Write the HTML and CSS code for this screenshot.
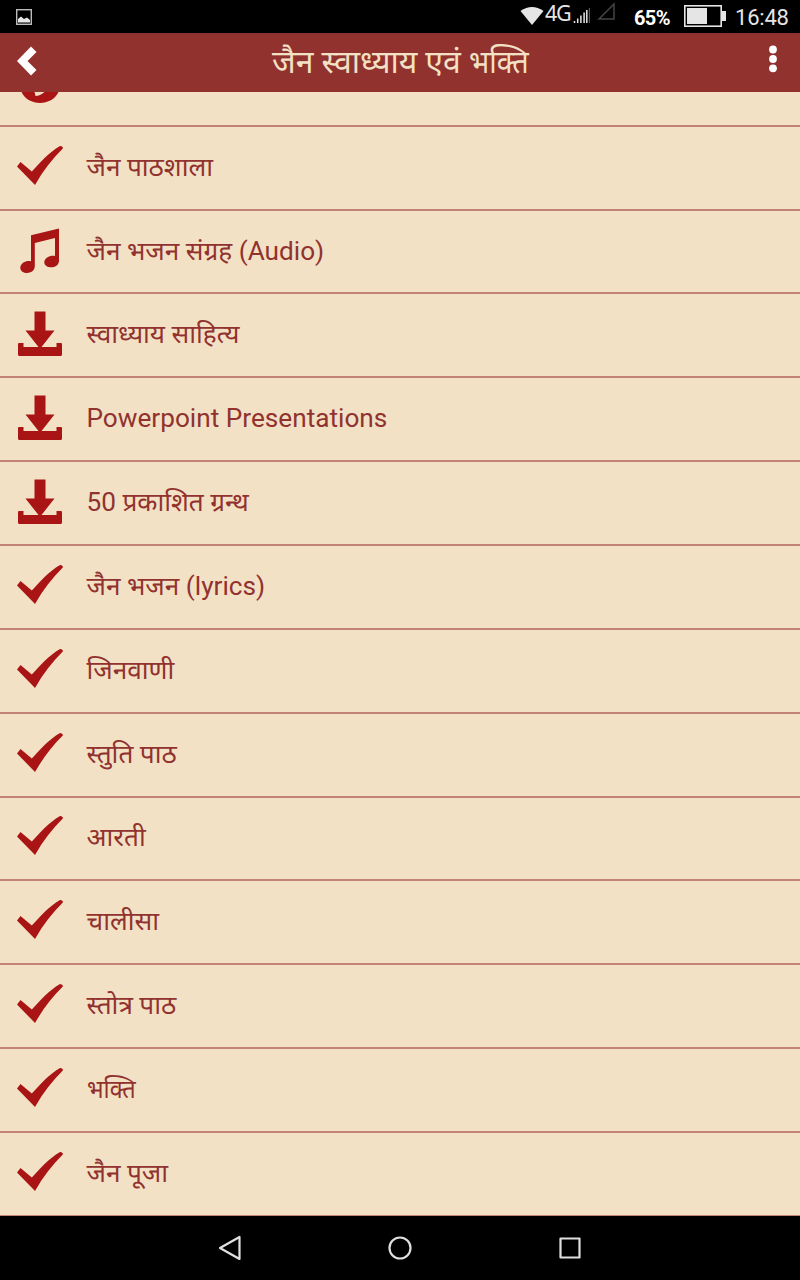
FILE: index.html
```html
<!DOCTYPE html>
<html lang="hi">
<head>
<meta charset="utf-8">
<title>जैन स्वाध्याय एवं भक्ति</title>
<link rel="stylesheet" href="styles.css">
</head>
<body>
<svg class="defs" width="0" height="0">
  <symbol id="check" viewBox="0 0 80 82"><path d="M17 39.500L20.500 35L31.800 44.600C40 35.500 49 25.500 60 19Q63.500 19.500 62.800 21.500C52 32 43 44 35 58Z"/></symbol>
  <symbol id="music" viewBox="0 0 80 82"><path d="M31 24.300L59 17.400V50C58.500 58.500 44.300 58 44.300 51.200C44.500 46.200 51 43.800 55 45V27L34.800 32V55.500C34 64.300 20.300 63.500 20.300 56.700C20.500 51.500 27 49 31 50.300Z"/></symbol>
  <symbol id="download" viewBox="0 0 80 82"><path d="M34.500 17.500H45.500V36.500H54.500L41.500 53H56.500V49H61Q62 49 62 50V60.500Q62 62 60.500 62H19.500Q18 62 18 60.500V50Q18 49 19 49H23.500V53H38.500L25.500 36.500H34.500Z"/></symbol>
</svg>
<div class="screen">
  <header class="status">
    <svg class="status-icon" width="18" height="18" viewBox="0 0 18 18"><rect x="1.700" y="1.700" width="14.600" height="14.600" fill="none" stroke="#bbb" stroke-width="1.400"/><path d="M3 14.500V11L6 8.500L9 11L12 9.500L15 12V14.500Z" fill="#e5e5e5"/></svg>
    <div class="status-right">
      <svg class="wifi" width="24" height="20" viewBox="0 0 24 20"><path d="M.5 5Q12-3 23.500 5L12 19Z" fill="#e5e5e5"/></svg>
      <span class="net">4G</span>
      <svg class="signal" width="18" height="18" viewBox="0 0 18 18"><path d="M1.500 16V14M4.700 16V11.500M7.900 16V8.500M11.100 16V5.500M13.800 16V3" stroke="#e5e5e5" stroke-width="1.500"/><path d="M16.400 16V1" stroke="#555" stroke-width="1.200"/></svg>
      <svg class="nosim" width="20" height="19" viewBox="0 0 20 19"><path d="M2 17L17 2V17Z" fill="none" stroke="#444" stroke-width="1.500"/></svg>
      <span class="percent">65%</span>
      <svg class="battery" width="42" height="22" viewBox="0 0 42 22"><rect x=".8" y=".8" width="36.400" height="20.400" fill="none" stroke="#e5e5e5" stroke-width="1.600"/><path d="M3 3H23V19H3ZM37 6H42V16H37Z" fill="#e5e5e5"/></svg>
      <span class="clock">16:48</span>
    </div>
  </header>
  <nav class="bar">
    <svg class="back" width="20" height="30" viewBox="0 0 20 30"><path d="M14 .5L19.500 6L10.500 15L19.500 24L14 29.500L0 15Z" fill="#fff"/></svg>
    <h1 class="title">जैन स्वाध्याय एवं <span class="narrow">भक्ति</span></h1>
    <svg class="more" width="8" height="28" viewBox="0 0 8 28"><circle cx="4" cy="4.500" r="3.900"/><circle cx="4" cy="14" r="3.900"/><circle cx="4" cy="23.300" r="3.900"/></svg>
  </nav>
  <main class="list">
    <div class="row row-cut"><svg width="80" height="32" viewBox="0 0 80 32"><path d="M21.500 0C28 14.500 52 14.500 58.500 0H44.500Q40 4 35.500 4L34.500 0Z"/></svg></div>
    <div class="row"><svg class="icon"><use href="#check"/></svg><span class="label">जैन पाठशाला</span></div>
    <div class="row"><svg class="icon"><use href="#music"/></svg><span class="label">जैन भजन संग्रह (Audio)</span></div>
    <div class="row"><svg class="icon"><use href="#download"/></svg><span class="label">स्वाध्याय साहित्य</span></div>
    <div class="row"><svg class="icon"><use href="#download"/></svg><span class="label">Powerpoint Presentations</span></div>
    <div class="row"><svg class="icon"><use href="#download"/></svg><span class="label">50 प्रकाशित ग्रन्थ</span></div>
    <div class="row"><svg class="icon"><use href="#check"/></svg><span class="label">जैन भजन (lyrics)</span></div>
    <div class="row"><svg class="icon"><use href="#check"/></svg><span class="label">जिनवाणी</span></div>
    <div class="row"><svg class="icon"><use href="#check"/></svg><span class="label">स्तुति पाठ</span></div>
    <div class="row"><svg class="icon"><use href="#check"/></svg><span class="label">आरती</span></div>
    <div class="row"><svg class="icon"><use href="#check"/></svg><span class="label">चालीसा</span></div>
    <div class="row"><svg class="icon"><use href="#check"/></svg><span class="label">स्तोत्र पाठ</span></div>
    <div class="row"><svg class="icon"><use href="#check"/></svg><span class="label"><span class="narrow">भक्ति</span></span></div>
    <div class="row"><svg class="icon"><use href="#check"/></svg><span class="label">जैन पूजा</span></div>
  </main>
  <footer class="nav">
    <svg width="24" height="26" viewBox="0 0 24 26"><path d="M2 13L21.500 2V24Z"/></svg>
    <svg width="24" height="24" viewBox="0 0 24 24"><circle cx="12" cy="12" r="10.500"/></svg>
    <svg width="24" height="24" viewBox="0 0 24 24"><rect x="2.500" y="2.500" width="19" height="19"/></svg>
  </footer>
</div>
</body>
</html>
```
FILE: styles.css
```css
* { box-sizing: border-box; }
body { margin: 0; background: #000; font-family: Roboto, "Noto Sans", "Noto Sans Devanagari", sans-serif; }
svg { display: block; flex: none; }
.defs { position: absolute; }
.screen { width: 800px; height: 1280px; display: flex; flex-direction: column; overflow: hidden; }
.status { height: 33px; flex: none; display: flex; justify-content: space-between; padding: 0 11px 0 15px; background: #000; color: #e5e5e5; }
.status-icon { margin-top: 8px; }
.status-right { display: flex; white-space: nowrap; }
.wifi { margin-top: 6px; }
.net { width: 28px; margin-left: 1px; font-family: "Noto Sans", sans-serif; font-size: 21.500px; line-height: 25px; letter-spacing: -1.300px; }
.signal { margin: 7px 0 0 0; }
.nosim { margin: 2px 0 0 6px; }
.percent { width: 36px; margin-left: 17px; font-size: 20px; font-weight: 700; line-height: 36px; color: #fff; letter-spacing: -.6px; }
.battery { margin: 5px 0 0 14px; }
.clock { width: 54px; margin-left: 9px; font-size: 22px; line-height: 35px; letter-spacing: -.2px; }
.bar { height: 59px; flex: none; display: flex; align-items: center; justify-content: space-between; padding: 0 23px 0 17px; background: #91322f; }
.back { margin-top: -4px; }
.title { margin: 0 0 0 -5px; width: 257px; color: #f3e1c6; font-size: 32px; line-height: 59px; font-weight: 400; white-space: nowrap; }
.narrow { display: inline-block; transform: scaleX(.9); transform-origin: left; }
.more { fill: #fff; margin-top: -7px; }
.list { height: 1124px; flex: none; overflow: hidden; background: #f3e1c6; fill: #a91414; }
.row { height: 83.850px; display: flex; align-items: center; border-bottom: 2px solid #c28376; }
.row-cut { height: 34.800px; align-items: flex-start; }
.row:last-child { height: 83px; border-bottom-width: 1px; }
.icon { width: 80px; height: 82px; }
.label { margin-left: 6.500px; padding-bottom: 2px; color: #91322f; font-size: 26.200px; line-height: 60px; white-space: nowrap; }
.nav { height: 64px; flex: none; display: flex; justify-content: center; align-items: center; gap: 146px; background: #000; fill: none; stroke: #e0e0e0; stroke-width: 2.200; stroke-linejoin: round; }
```
